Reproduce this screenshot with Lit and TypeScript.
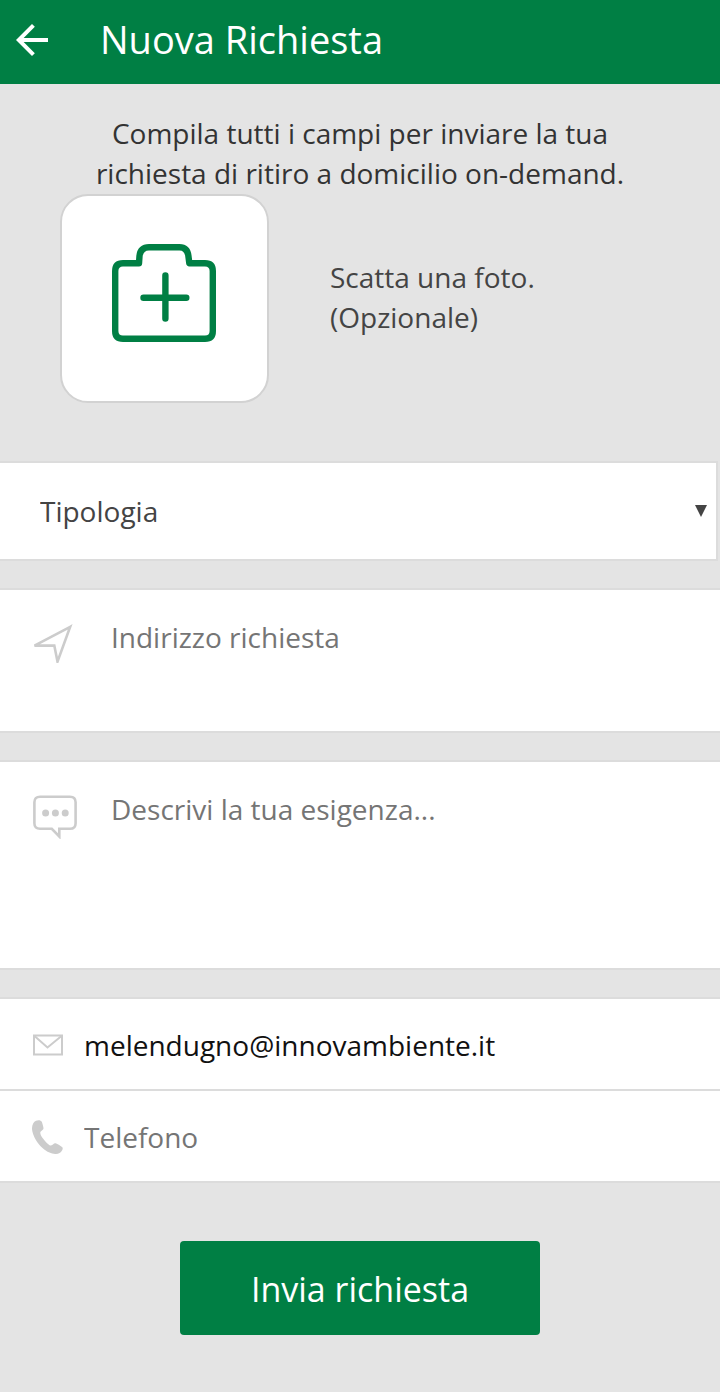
import { LitElement, html, css } from "lit";
import { customElement, state } from "lit/decorators.js";

@customElement("app-root")
export class AppRoot extends LitElement {
  @state() private email = "melendugno@innovambiente.it";

  static styles = css`
    :host {
      display: block;
      min-height: 100vh;
      background: #e4e4e4;
      color: #444;
      font-family: "Open Sans", "Noto Sans", sans-serif;
      font-size: 28px;
      line-height: 40px;
    }
    *,
    *::before,
    *::after {
      box-sizing: border-box;
    }
    svg {
      display: block;
      flex: none;
    }
    button,
    input,
    select,
    textarea {
      margin: 0;
      border: 0;
      padding: 0;
      border-radius: 0;
      background: none;
      color: inherit;
      font: inherit;
    }
    button,
    select {
      cursor: pointer;
    }
    input,
    textarea {
      flex: 1;
      min-width: 0;
      outline: none;
    }
    ::placeholder {
      color: #757575;
      opacity: 1;
    }
    .bar {
      display: flex;
      align-items: center;
      gap: 52px;
      height: 84px;
      padding: 0 16px 4px;
      background: #007f44;
      color: #fff;
    }
    .title {
      margin: 0;
      padding-bottom: 2px;
      font-size: 38px;
      font-weight: 400;
      line-height: 52px;
    }
    .intro {
      margin: 0 auto;
      max-width: 600px;
      padding: 29px 0 1px;
      color: #333;
      text-align: center;
    }
    .photo {
      display: flex;
      align-items: center;
      gap: 61px;
      padding: 0 60px;
    }
    .photo label {
      padding-bottom: 4px;
    }
    .photo-button {
      flex: none;
      width: 209px;
      height: 209px;
      padding: 48px 50px;
      border: 2px solid #d2d2d2;
      border-radius: 28px;
      background: #fff;
      display: flex;
      align-items: flex-start;
    }
    .fields {
      display: flex;
      flex-direction: column;
      gap: 27px;
      padding-top: 58px;
    }
    .type {
      position: relative;
      margin-right: 2px;
      height: 100px;
    }
    .select {
      display: block;
      width: 100%;
      height: 100%;
      padding: 0 40px;
      border: 2px solid #dcdcdc;
      border-left: 0;
      background: #fff;
      appearance: none;
    }
    .caret {
      position: absolute;
      right: 11px;
      top: 44px;
      pointer-events: none;
    }
    .panel {
      border: solid #dcdcdc;
      border-width: 2px 0;
      background: #fff;
    }
    .area {
      display: flex;
      align-items: flex-start;
      padding: 27px 20px 0 33px;
    }
    .area-icon {
      width: 78px;
      padding-top: 6px;
    }
    .area textarea {
      resize: none;
      height: 114px;
    }
    .area.tall textarea {
      height: 179px;
    }
    .row {
      display: flex;
      align-items: center;
      height: 90px;
      padding: 2px 20px 0 32px;
    }
    .row + .row {
      height: 92px;
      border-top: 2px solid #dcdcdc;
    }
    .row-icon {
      width: 52px;
    }
    .row input {
      height: 60px;
    }
    .email {
      color: #111;
    }
    .actions {
      display: flex;
      justify-content: center;
      padding: 58px 0 57px;
    }
    .submit {
      width: 50%;
      height: 94px;
      padding-top: 2px;
      border-radius: 4px;
      background: #007f44;
      color: #fff;
      font-size: 34px;
    }
  `;

  private onEmail(e: Event) {
    this.email = (e.target as HTMLInputElement).value;
  }

  render() {
    return html`
      <header class="bar">
        <button type="button" aria-label="Indietro">
          <svg width="32" height="32" viewBox="4 4 16 16" fill="#fff">
            <path d="M20 11H7.83l5.59-5.59L12 4l-8 8 8 8 1.41-1.41L7.83 13H20v-2z" />
          </svg>
        </button>
        <h1 class="title">Nuova Richiesta</h1>
      </header>
      <form @submit=${(e: Event) => e.preventDefault()}>
        <p class="intro">
          Compila tutti i campi per inviare la tua richiesta di ritiro a domicilio on-demand.
        </p>
        <div class="photo">
          <button class="photo-button" id="photo" type="button">
            <svg width="104" height="98" viewBox="0 0 104 98" fill="none" stroke="#007f44"
              stroke-width="6.4" stroke-linecap="round" stroke-linejoin="round">
              <path d="M27 19.2H11Q3.2 19.2 3.2 27V87Q3.2 94.8 11 94.8H93Q100.8 94.8 100.8 87V27Q100.8 19.2 93 19.2H77.3L76.4 12Q75.4 3.2 67.5 3.2H37Q28.5 3.2 27.5 12Z" />
              <path d="M31.5 53.7H74.3M53.4 31.5V74.5" />
            </svg>
          </button>
          <label for="photo">Scatta una foto.<br />(Opzionale)</label>
        </div>
        <div class="fields">
          <div class="type">
            <select class="select" aria-label="Tipologia">
              <option>Tipologia</option>
            </select>
            <svg class="caret" width="12" height="12" viewBox="0 0 12 12" fill="#444">
              <path d="M0 0H12L6 12Z" />
            </svg>
          </div>
          <div class="panel area">
            <label class="area-icon" for="address" aria-label="Indirizzo richiesta">
              <svg width="40" height="40" viewBox="0 -2 40 40" fill="none" stroke="#ccc" stroke-width="2.6">
                <path d="M37.200 1.800L1.500 20.600H21.300L24.500 36.600Z" />
              </svg>
            </label>
            <textarea id="address" placeholder="Indirizzo richiesta"></textarea>
          </div>
          <div class="panel area tall">
            <label class="area-icon" for="need" aria-label="Descrivi la tua esigenza">
              <svg width="44" height="44" viewBox="0 0 44 44" fill="none" stroke="#ccc" stroke-width="2.6">
                <path d="M7 1.700H37Q42.600 1.700 42.600 7.300V28.200Q42.600 33.800 37 33.800H26.300V41.500L18.800 33.800H7Q1.400 33.800 1.400 28.200V7.300Q1.400 1.700 7 1.700Z" />
                <g fill="#ccc" stroke="none">
                  <circle cx="12.600" cy="18" r="3.500" />
                  <circle cx="22.400" cy="18" r="3.500" />
                  <circle cx="32.200" cy="18" r="3.500" />
                </g>
              </svg>
            </label>
            <textarea id="need" placeholder="Descrivi la tua esigenza..."></textarea>
          </div>
          <div class="panel">
            <div class="row">
              <label class="row-icon" for="email" aria-label="Email">
                <svg width="32" height="22" viewBox="0 0 32 22" fill="none" stroke="#ccc" stroke-width="2">
                  <path d="M2 1.500H30V20.500H2Z" />
                  <path d="M2.500 2L15.500 13.500L29.500 2" />
                </svg>
              </label>
              <input class="email" id="email" type="email" .value=${this.email} @input=${this.onEmail} />
            </div>
            <div class="row">
              <label class="row-icon" for="phone" aria-label="Telefono">
                <svg width="31" height="34" viewBox="0 0 31 34" fill="#ccc">
                  <path d="M4 .7C6-.2 9-.1 9.800 1.800C10.600 4 11.300 6.500 11.500 8.300C11.500 10.300 8.400 11.100 8.300 12.500C8.200 14.300 9.200 16.300 11 18.600C13 21.300 15.600 24.300 17.600 25.300C20 26.300 21.500 22.800 23.700 23.200C25.500 23.700 29 26 30.300 27.300C31.600 28.900 29.600 31.800 27.500 33.100C25 34.600 20.500 34.100 17.500 32.600C12.500 30.400 7.500 26 4.500 21C2 17 .2 12.500 0 9C-.1 5 1.500 1.700 4 .7Z" />
                </svg>
              </label>
              <input id="phone" type="tel" placeholder="Telefono" />
            </div>
          </div>
        </div>
        <div class="actions">
          <button class="submit" type="submit">Invia richiesta</button>
        </div>
      </form>
    `;
  }
}
